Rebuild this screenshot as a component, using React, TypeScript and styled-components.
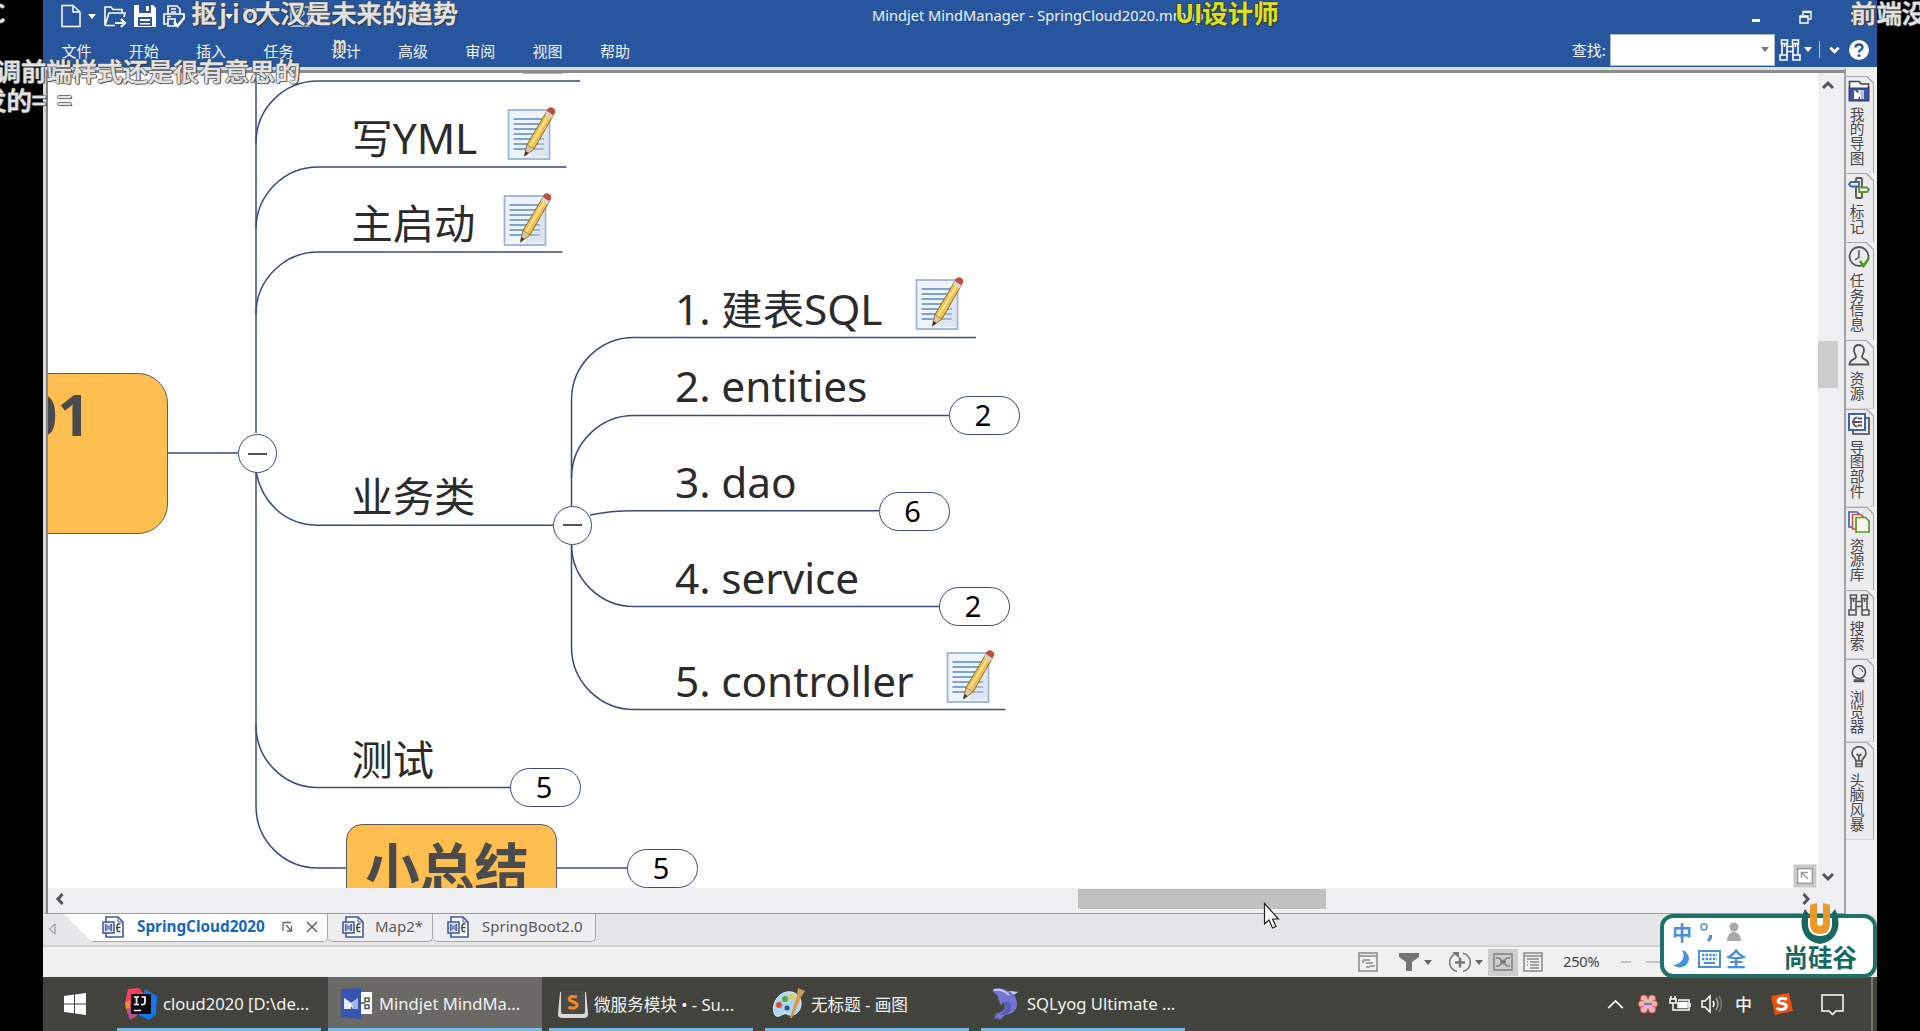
import React from "react";
import styled, { createGlobalStyle, css } from "styled-components";

const LATIN = `"Noto Sans", "Noto Sans CJK SC", sans-serif`;
const CJK = `"Noto Sans CJK SC", "Noto Sans", sans-serif`;
const INK = "#3a4a7c";

const GlobalStyle = createGlobalStyle`
  * { box-sizing: border-box; }
  body { margin: 0; background: #000; font-family: ${LATIN}; overflow: hidden; }
  svg { display: block; flex: none; }
`;

/* ---------- shell ---------- */
const Screen = styled.div`
  position: relative;
  width: 1920px;
  height: 1031px;
  padding: 0 43px;
  background: #000;
  overflow: hidden;
`;
const AppWindow = styled.div`
  width: 1834px;
  height: 1031px;
  display: flex;
  flex-direction: column;
  background: #efeef0;
`;
const Header = styled.header`
  height: 67px;
  flex: none;
  background: #27569e;
  color: #eef3fb;
`;
const TitleRow = styled.div`
  height: 32px;
  display: flex;
  align-items: center;
  padding: 0 15px 0 18px;
`;
const QuickTools = styled.div`
  display: flex;
  align-items: center;
  gap: 7px;
  width: 811px;
`;
const WindowTitle = styled.div`
  font-size: 14.6px;
  line-height: 30px;
  padding-bottom: 2px;
  white-space: nowrap;
  flex: 1;
`;
const WindowButtons = styled.div`
  display: flex;
  align-items: center;
  gap: 38px;
  padding-top: 2px;
`;
const MenuRow = styled.div`
  height: 35px;
  display: flex;
  align-items: center;
  padding: 0 8px 0 18.500px;
`;
const Menus = styled.nav`
  display: flex;
  flex: 1;
`;
const MenuItem = styled.span`
  width: 67.3px;
  font: 15px/35px ${CJK};
  padding-top: 1px;
`;
const FindLabel = styled.span`
  font: 15px/35px ${CJK};
  margin-right: 4px;
`;
const FindBox = styled.div`
  width: 165px;
  height: 32px;
  background: #fff;
  border: 1px solid #a9b6d0;
  display: flex;
  align-items: center;
  justify-content: flex-end;
  padding-right: 5px;
  margin-right: 4px;
`;
const Divider = styled.i`
  width: 1px;
  height: 17px;
  background: #b5c4e0;
  margin: 0 8px 0 7px;
`;
const Help = styled.svg`
  margin-left: 8px;
`;
const Caret = styled.i<{ $c?: string; $ml?: number }>`
  width: 0;
  height: 0;
  flex: none;
  border: 4px solid transparent;
  border-top: 5px solid ${(p) => p.$c || "#fff"};
  border-bottom: 0;
  margin-left: ${(p) => p.$ml || 0}px;
`;

/* ---------- work area ---------- */
const Body = styled.div`
  display: flex;
  height: 847px;
  flex: none;
`;
const DocPane = styled.div`
  width: 1803px;
  height: 847px;
  border-top: 3px solid #dedee2;
  border-left: 3px solid #d8d8d8;
  border-right: 2px solid #a2a2a6;
  border-bottom: 1px solid #9c9c9e;
`;
const DocInner = styled.div`
  height: 843px;
  width: 1798px;
  border-top: 3px solid #8c8c8c;
  border-left: 2px solid #858585;
  background: #efeef0;
  display: grid;
  grid-template-columns: 1770px 20px;
  grid-template-rows: 815px 24px;
`;
const Canvas = styled.main`
  position: relative;
  overflow: hidden;
  background: #fff;
`;
const Plane = styled.div`
  position: absolute;
  left: -48px;
  top: -73px;
  width: 1818px;
  height: 888px;
`;
const VScroll = styled.div`
  display: flex;
  flex-direction: column;
  align-items: center;
  padding: 5px 0 4px;
  & > svg:last-child { margin-top: auto; }
`;
const VThumb = styled.div`
  width: 20px;
  height: 47px;
  background: #cdcdcd;
  margin-top: 249px;
`;
const HScroll = styled.div`
  display: flex;
  align-items: flex-start;
  justify-content: space-between;
  padding: 1px 5px 0 5px;
  & > svg { margin-top: 3px; }
`;
const HThumb = styled.div`
  width: 248px;
  height: 20px;
  background: #c0c0c0;
  margin-left: 538px;
`;

/* ---------- map nodes (free canvas) ---------- */
const Topic = styled.div<{ $x: number; $base: number }>`
  position: absolute;
  left: ${(p) => p.$x}px;
  top: ${(p) => p.$base - 41}px;
  font-size: 42.4px;
  line-height: 50px;
  letter-spacing: -0.1px;
  color: #2b2b2b;
  white-space: pre;
`;
const Hanzi = styled.span`
  font-size: 41.3px;
  letter-spacing: 0;
`;
const Box = styled.div<{ $x: number; $y: number; $w: number; $h: number; $r: number }>`
  position: absolute;
  left: ${(p) => p.$x}px;
  top: ${(p) => p.$y}px;
  width: ${(p) => p.$w}px;
  height: ${(p) => p.$h}px;
  border-radius: ${(p) => p.$r}px;
  border: 1.5px solid #5c5a62;
  background: #ffbf50;
  color: #4b4a4c;
  font-weight: 700;
  text-align: right;
`;
const BigNumber = styled.div`
  font-size: 57px;
  line-height: 80px;
  padding-right: 77px;
`;
const BigLabel = styled.div`
  font: 700 54.5px/80px ${CJK};
  text-align: center;
  padding: 1px 8px 0 0;
  white-space: nowrap;
`;
const Pill = styled.div<{ $x: number; $y: number }>`
  position: absolute;
  left: ${(p) => p.$x}px;
  top: ${(p) => p.$y}px;
  width: 71px;
  height: 39px;
  border: 1.5px solid ${INK};
  border-radius: 20px;
  background: #fff;
  color: #000;
  font-size: 29px;
  line-height: 36px;
  text-align: center;
  padding-right: 3px;
`;
const Toggle = styled.div<{ $x: number; $y: number }>`
  position: absolute;
  left: ${(p) => p.$x - 19.5}px;
  top: ${(p) => p.$y - 19.5}px;
  width: 39px;
  height: 39px;
  border: 1.5px solid ${INK};
  border-radius: 50%;
  background: #fff;
  display: flex;
  align-items: center;
  justify-content: center;
  &::after { content: ""; width: 19px; height: 2px; background: #555; }
`;
const Pinned = styled.div<{ $x: number; $y: number }>`
  position: absolute;
  left: ${(p) => p.$x}px;
  top: ${(p) => p.$y}px;
`;
const FitButton = styled.div`
  position: absolute;
  right: 2px;
  bottom: 1px;
  width: 22px;
  height: 22px;
  background: #fff;
  border: 3px solid #c9c9c9;
  outline: 1px solid #e2e2e2;
`;

/* ---------- side tabs ---------- */
const Side = styled.aside`
  width: 31px;
  padding-top: 8.5px;
  background: #f0eff2;
`;
const SideTab = styled.div<{ $h: number }>`
  position: relative;
  width: 28px;
  height: ${(p) => p.$h}px;
  background: #a9a9ab;
  clip-path: polygon(0 0, 21px 0, 28px 7px, 28px 100%, 0 100%);
  padding: 1px 1px 0 0;
`;
const SideFace = styled.div`
  width: 27px;
  height: 100%;
  background: #ececee;
  clip-path: polygon(0 0, 20px 0, 27px 7px, 27px 100%, 0 100%);
  display: flex;
  flex-direction: column;
  align-items: center;
  padding: 3px 1px 0 0;
`;
const SideText = styled.div`
  width: 16px;
  margin: 5px 4px 0 0;
  font: 14.7px/14.7px ${CJK};
  color: #484850;
  word-break: break-all;
  text-align: center;
  overflow-wrap: anywhere;
`;

/* ---------- document tabs and status ---------- */
const TabStrip = styled.div`
  height: 33px;
  flex: none;
  background: #e6e6e8;
  border-bottom: 2px solid #d2d2d4;
  display: flex;
  align-items: flex-start;
`;
const ScrollLeft = styled.div`
  width: 21px;
  height: 30px;
  display: flex;
  align-items: center;
  padding-left: 5px;
`;
const DocTab = styled.div<{ $w: number; $active?: boolean; $gap?: number }>`
  height: 28px;
  width: ${(p) => p.$w}px;
  display: flex;
  align-items: center;
  padding: 0 0 2px 14px;
  font-size: 15px;
  color: #5a5a5c;
  background: #eeeef0;
  border: solid #a8a8aa;
  border-width: 0 1px 1px 0;
  border-radius: 0 0 5px 5px;
  white-space: nowrap;
  & > span { margin-left: ${(p) => p.$gap ?? 12}px; line-height: 24px; padding-bottom: 2px; }
  ${(p) =>
    p.$active &&
    css`
      background: #fff;
      color: #1466c4;
      font-weight: 700;
      font-size: 15.3px;
      padding-left: 38px;
      clip-path: polygon(0 0, 100% 0, 100% 100%, 28px 100%);
    `}
`;
const TabTools = styled.svg`
  margin-left: 17px;
`;
const StatusBar = styled.div`
  height: 30px;
  flex: none;
  background: #f0f0f0;
  display: flex;
  align-items: center;
  padding-left: 1315px;
  color: #444;
`;
const StatusButton = styled.div<{ $on?: boolean; $ml?: number }>`
  display: flex;
  align-items: center;
  justify-content: center;
  height: 27px;
  padding: 0 5px;
  margin-left: ${(p) => p.$ml || 0}px;
  background: ${(p) => (p.$on ? "#cdcdcd" : "transparent")};
`;
const Zoom = styled.span`
  font-size: 14.6px;
  line-height: 20px;
  padding-bottom: 2px;
  margin-left: 15px;
  width: 58px;
  letter-spacing: -0.2px;
`;
const Dash = styled.i<{ $w: number }>`
  width: ${(p) => p.$w}px;
  height: 2px;
  background: #c4c4c4;
  margin-right: 15px;
`;

/* ---------- taskbar ---------- */
const Taskbar = styled.footer`
  height: 54px;
  flex: none;
  background: #43433d;
  display: flex;
  color: #f2f2f0;
`;
const StartButton = styled.div`
  width: 74px;
  padding: 16px 0 0 21px;
`;
const Task = styled.div<{ $w: number; $mr: number; $on?: boolean; $gap?: number; $pl?: number }>`
  width: ${(p) => p.$w}px;
  margin-right: ${(p) => p.$mr}px;
  height: 54px;
  display: flex;
  align-items: center;
  gap: ${(p) => p.$gap ?? 6}px;
  padding-left: ${(p) => p.$pl ?? 8}px;
  background: ${(p) => (p.$on ? "#6a6965" : "transparent")};
  border-bottom: 3px solid #76b9ed;
  padding-top: 2px;
  font-size: 16.6px;
  white-space: nowrap;
`;
const Tray = styled.div`
  margin-left: auto;
  display: flex;
  align-items: center;
  padding-right: 4px;
`;
const TrayItem = styled.div<{ $w: number }>`
  width: ${(p) => p.$w}px;
  font: 500 17px/20px ${CJK};
`;
const ShowDesktop = styled.i`
  width: 2px;
  height: 54px;
  background: #77776f;
`;

/* ---------- overlays ---------- */
const Comment = styled.div<{ $x: number; $y: number; $c?: string; $bold?: boolean }>`
  position: absolute;
  left: ${(p) => p.$x}px;
  top: ${(p) => p.$y}px;
  font: ${(p) => (p.$bold ? 700 : 500)} 25.4px/30px ${CJK};
  color: ${(p) => p.$c || "#e2e3e5"};
  -webkit-text-stroke: ${(p) => (p.$bold ? 0 : 0.5)}px ${(p) => p.$c || "#e2e3e5"};
  white-space: pre;
  text-shadow: 1px 0 #444, -1px 0 #444, 0 1px #444, 0 -1px #444, 1px 1px 1px #222;
`;
const Half = styled.span<{ $s?: number }>`
  display: inline-block;
  width: 12.7px;
  text-align: center;
  font-size: ${(p) => p.$s || 25.4}px;
`;
const Narrow = styled.span`
  display: inline-block;
  font-size: 24px;
  transform: scaleX(0.6);
  transform-origin: 0 50%;
`;
const ImeBar = styled.div`
  position: absolute;
  left: 1660px;
  top: 914px;
  width: 217px;
  height: 64px;
  border: 4px solid #1e7068;
  border-radius: 13px;
  background: #fff;
  display: flex;
  justify-content: space-between;
  padding: 2px 16px 0 8px;
`;
const ImeKeys = styled.div`
  display: grid;
  grid-template-columns: 26px 28px 24px;
  grid-template-rows: 25px 27px;
  align-items: center;
  font: 700 20px/24px ${CJK};
  color: #4a8fdc;
`;
const Brand = styled.div`
  display: flex;
  flex-direction: column;
  align-items: center;
  margin-top: -17px;
  font: 700 24.5px/24px ${CJK};
  color: #17695f;
  & > span { margin-top: 1px; }
`;
const Cursor = styled.div`
  position: absolute;
  left: 1262.5px;
  top: 902px;
`;

/* ---------- icons ---------- */
const NoteIcon = () => (
  <svg width="50" height="56" viewBox="0 0 50 56">
    <rect x="1.500" y="4" width="41" height="49" fill="#eef4fc" stroke="#9cb4d8" strokeWidth="1.8" />
    <path d="M6.500 13H36M6.500 18H35M6.500 23H34M6.500 28H36M6.500 33H37M6.500 38H37M6.500 43H37" stroke="#7fa3d2" strokeWidth="1.8" />
    <path d="M22 51L42 50V20Z" fill="#c8d2e2" opacity=".45" />
    <path d="M17.500 50L20 38.500L40 5L46.500 9L27 43Z" fill="#f0c04c" stroke="#8a6a2c" strokeWidth="1" />
    <path d="M23 40.500L42.500 8" stroke="#fbe7a0" strokeWidth="2" />
    <path d="M17.500 50L20 38.500L27 43Z" fill="#e2c69a" stroke="#8a7450" strokeWidth=".7" />
    <path d="M17.500 50L18.500 45L21.500 47Z" fill="#333" />
    <path d="M40 5L46.500 9L44.500 12.500L38 8.500Z" fill="#d9d4c4" />
    <path d="M40.500 4.500C41 1 46 1 47.500 4C48 6.500 47 8 46 8.500Z" fill="#c94b40" stroke="#b5443a" />
  </svg>
);
const Chevron = ({ d, c = "#555", s = 14, w = 3 }: { d: string; c?: string; s?: number; w?: number }) => (
  <svg width={s} height={s} viewBox="0 0 14 14">
    <path d={d} fill="none" stroke={c} strokeWidth={w} />
  </svg>
);
const UP = "M2 10L7 5L12 10";
const DOWN = "M2 4L7 9L12 4";
const LEFT = "M9.500 2L5 7L9.500 12";
const RIGHT = "M4.500 2L9 7L4.500 12";

const Binoculars = ({ c = "#fff" }: { c?: string }) => (
  <svg width="22" height="22" viewBox="0 0 22 22" fill="none" stroke={c} strokeWidth="1.600">
    <path d="M2.500 1H8.500V4.500H2.500ZM13.500 1H19.500V4.500H13.500ZM3 4.500V16M19 4.500V16M8 4.500V16M14 4.500V16M5.500 4.500V8M16.500 4.500V8M8 7.500H14M8 12.500H14M1 16H8V21H1ZM14 16H21V21H14Z" />
  </svg>
);
const MapFileIcon = () => (
  <svg width="22" height="22" viewBox="0 0 22 22">
    <path d="M4 1H16L21 6V21H4Z" fill="#fff" stroke="#3c55a8" strokeWidth="1.600" />
    <path d="M16 1V6H21" fill="none" stroke="#3c55a8" />
    <rect x="1" y="6" width="11" height="11" fill="#dfe4f2" stroke="#3c55a8" strokeWidth="1.500" />
    <path d="M3.500 15V8L6.500 11L9.500 8V15L6.500 12Z" fill="#8d95b5" stroke="#53629c" />
    <path d="M14 11.500H18.500M18.500 8H16L15 9.500V14L16 15.500H18.500" fill="none" stroke="#444" strokeWidth="1.400" />
  </svg>
);

const sideIcons: Record<string, React.ReactNode> = {
  maps: (
    <>
      <path d="M1.500 8V1.500H11L13 4H20.500V8" fill="#fff" stroke="#444" strokeWidth="1.600" />
      <rect x="1" y="8" width="20" height="13" fill="#3b52a4" stroke="#333a5c" />
      <path d="M6 10L10.500 13.500V10H16V19H12V16L10.500 17.500V19H6Z" fill="#fff" />
      <path d="M12 10L16 10V19H13Z" fill="#b9bfd4" />
    </>
  ),
  marks: (
    <g fill="none" strokeWidth="1.800">
      <rect x="8" y="1" width="6" height="20" rx="1" stroke="#555" />
      <path d="M3 5H11V9.500H3L1 7.200Z" stroke="#3a63b4" fill="#eef" />
      <path d="M11 10.500H19L21 12.700L19 15H11Z" stroke="#5c962c" fill="#efe" />
    </g>
  ),
  task: (
    <g fill="none">
      <circle cx="11" cy="10.500" r="9.500" stroke="#555" strokeWidth="1.800" />
      <path d="M11 4V11L7 14" stroke="#555" strokeWidth="1.500" />
      <path d="M12 15L15.500 20L21 12" stroke="#4f9a1e" strokeWidth="2.600" />
    </g>
  ),
  person: (
    <path d="M11 1C7.500 1 6 3.500 6 6C6 9 8 10.500 8 13C8 15.500 1.500 15 1.500 20.500H20.500C20.500 15 14 15.500 14 13C14 10.500 16 9 16 6C16 3.500 14.500 1 11 1Z" fill="none" stroke="#555" strokeWidth="1.800" />
  ),
  parts: (
    <g fill="none">
      <path d="M18 5H21V21H5V18" stroke="#444" strokeWidth="1.600" />
      <rect x="1" y="1" width="16" height="16" fill="#fff" stroke="#3a63b4" strokeWidth="2" />
      <path d="M4 9H10M9.500 4.500C4 4.500 4 13.500 9.500 13.500M10 5.500H14M10 9H14M10 12.500H14" stroke="#555" strokeWidth="2" />
    </g>
  ),
  library: (
    <g strokeWidth="1.700">
      <path d="M1 1H9L12 4V16H1Z" fill="#fff" stroke="#3a63b4" />
      <path d="M4.500 3.500H13L16 7V18H4.500Z" fill="#fff" stroke="#d2502e" />
      <path d="M8 6.500H17.500L21 10V21H8Z" fill="#f4f8ec" stroke="#5c962c" />
    </g>
  ),
  globe: (
    <g fill="none" stroke="#555" strokeWidth="1.700">
      <circle cx="11" cy="9" r="6.500" />
      <path d="M11 5.500C13 5.500 14.500 7 14.500 9" strokeWidth="1" />
      <path d="M6.500 17H15.500V18.500H6.500Z" fill="#444" />
    </g>
  ),
  bulb: (
    <g fill="none" stroke="#555" strokeWidth="1.700">
      <path d="M8 15C8 12 4 11 4 7A7 6.300 0 0 1 18 7C18 11 14 12 14 15V20.500H8ZM8 15H14M8 18H14" />
      <path d="M8.500 8L11 10L13.500 8M11 10V15" />
    </g>
  ),
};

const sideTabs: [string, string, number][] = [
  ["maps", "我的导图", 97.5],
  ["marks", "标记", 69],
  ["task", "任务信息", 98],
  ["person", "资源", 68.5],
  ["parts", "导图部件", 98],
  ["library", "资源库", 83.5],
  ["find", "搜索", 68.5],
  ["globe", "浏览器", 83],
  ["bulb", "头脑风暴", 98],
];

const menus = ["文件", "开始", "插入", "任务", "设计", "高级", "审阅", "视图", "帮助"];

const branches = [
  "M167 453H238",
  "M256 73V433M256 473V806",
  "M256 143C256 108 284 81 318 81H580",
  "M256 229C256 195 284 167 318 167H566.500",
  "M256 314C256 280 284 252 318 252H562.500",
  "M256 472C262 502 284 525 318 525.300H553",
  "M256 725C256 760 284 787.500 318 787.500H510",
  "M256 806C256 841 284 868 318 868H346",
  "M556 868H628",
  "M571.500 506V400C571.500 365 600 337.500 634 337.500H976",
  "M571.500 478C571.500 443 600 415.500 634 415.500H949",
  "M590 515C604 512 618 510.700 634 510.700H879",
  "M571.500 544C571.500 579 600 606.500 634 606.500H939",
  "M571.500 544V647C571.500 682 600 709.500 634 709.500H1005.500",
];

export default function App() {
  return (
    <Screen>
      <GlobalStyle />
      <AppWindow>
        <Header>
          <TitleRow>
            <QuickTools>
              <svg width="20" height="24" viewBox="0 0 20 24" fill="none" stroke="#fff" strokeWidth="1.500">
                <path d="M1 1.500H12L19 8V22.500H1ZM12 1.500V8H19" />
              </svg>
              <Caret />
              <svg width="24" height="24" viewBox="0 0 24 24" fill="none" stroke="#fff" strokeWidth="1.600">
                <path d="M2 21.500V3H8L10 5.500H19V9M2 21.500L6 9H22L21 13M2 21.500H12" />
                <path d="M12 19H21M18 15L22 19L18 23" strokeWidth="2.200" />
              </svg>
              <svg width="22" height="22" viewBox="0 0 22 22">
                <path d="M0 0H19L22 3V22H0Z" fill="#fff" />
                <path d="M5 0H17V8H5ZM4 12H18V21H4Z" fill="#27569e" />
                <path d="M12 1H15V6H12ZM6 14H16V16H6ZM6 18H16V19.500H6Z" fill="#fff" />
              </svg>
              <svg width="22" height="24" viewBox="0 0 22 24" fill="none" stroke="#fff" strokeWidth="1.700">
                <path d="M5 10V2H14L17 5V10M8 5H13M8 8H13M4 20H1V10H21V15M5 15H12V22H5ZM4 12.500H8" />
                <path d="M11 18L14.500 22L21 14" strokeWidth="2.600" />
              </svg>
              <svg width="120" height="24" viewBox="0 0 120 24" fill="none" stroke="#c7d5ec" strokeWidth="2">
                <path d="M10 4L5 9L10 14M5 9H16C23 9 23 20 15 20" />
                <path d="M33 10H41L37 15Z" fill="#fff" stroke="none" />
                <path d="M51 4H65L58 14Z" fill="#6f8fc4" stroke="none" />
                <path d="M76 10H82L79 14Z" fill="#9db4da" stroke="none" />
                <path d="M99 22V3H117V22ZM104 9C104 5 112 5 112 9C112 12 108 11 108 15M108 17V19" strokeWidth="1.500" />
              </svg>
            </QuickTools>
            <WindowTitle>Mindjet MindManager - SpringCloud2020.mmap</WindowTitle>
            <WindowButtons>
              <svg width="10" height="12" viewBox="0 0 10 12"><path d="M1 9.500H9" stroke="#fff" strokeWidth="3" /></svg>
              <svg width="13" height="14" viewBox="0 0 13 14" fill="none" stroke="#fff" strokeWidth="1.400">
                <path d="M4 5V1.500H12V9H9M4 2.300H12" /><path d="M1 6H9V13H1ZM1 7H9" />
              </svg>
              <svg width="12" height="12" viewBox="0 0 12 12"><path d="M1.500 1.500L10.500 10.500M10.500 1.500L1.500 10.500" stroke="#fff" strokeWidth="2" /></svg>
            </WindowButtons>
          </TitleRow>
          <MenuRow>
            <Menus>{menus.map((m) => <MenuItem key={m}>{m}</MenuItem>)}</Menus>
            <FindLabel>查找:</FindLabel>
            <FindBox><Caret $c="#777" /></FindBox>
            <Binoculars />
            <Caret $ml={3} />
            <Divider />
            <Chevron d="M2.500 5L7 9.500L11.500 5" c="#fff" s={13} w={3} />
            <Help width="20" height="20" viewBox="0 0 20 20">
              <circle cx="10" cy="10" r="10" fill="#fff" />
              <path d="M6.500 7.500C6.500 3.500 13.500 3.500 13.500 7.500C13.500 10 10 9.500 10 12.500" fill="none" stroke="#27569e" strokeWidth="2.400" />
              <circle cx="10" cy="15.500" r="1.500" fill="#27569e" />
            </Help>
          </MenuRow>
        </Header>

        <Body>
          <DocPane>
            <DocInner>
              <Canvas>
                <Plane>
                  <svg width="1818" height="888" viewBox="0 0 1818 888" fill="none" stroke={INK} strokeWidth="1.500">
                    {branches.map((d) => <path key={d} d={d} />)}
                    <path d="M523 73H563" stroke="#a9b8cc" strokeWidth="2" />
                  </svg>
                  <Box $x={-60} $y={373} $w={228} $h={161} $r={30}><BigNumber>01</BigNumber></Box>
                  <Toggle $x={257} $y={453.5} />
                  <Toggle $x={572.5} $y={525} />
                  <Topic $x={351.5} $base={153.5}><Hanzi>写</Hanzi>YML</Topic>
                  <Topic $x={351.5} $base={238.500}><Hanzi>主启动</Hanzi></Topic>
                  <Topic $x={351.5} $base={512}><Hanzi>业务类</Hanzi></Topic>
                  <Topic $x={351.5} $base={775}><Hanzi>测试</Hanzi></Topic>
                  <Topic $x={675} $base={324.5}>1. <Hanzi>建表</Hanzi>SQL</Topic>
                  <Topic $x={675} $base={402}>2. entities</Topic>
                  <Topic $x={675} $base={498}>3. dao</Topic>
                  <Topic $x={675} $base={593.5}>4. service</Topic>
                  <Topic $x={675} $base={696.5}>5. controller</Topic>
                  <Pinned $x={507} $y={105.5}><NoteIcon /></Pinned>
                  <Pinned $x={503} $y={191.5}><NoteIcon /></Pinned>
                  <Pinned $x={915} $y={275.5}><NoteIcon /></Pinned>
                  <Pinned $x={946} $y={649}><NoteIcon /></Pinned>
                  <Pill $x={949} $y={396}>2</Pill>
                  <Pill $x={878.5} $y={491.5}>6</Pill>
                  <Pill $x={939} $y={587}>2</Pill>
                  <Pill $x={510} $y={768}>5</Pill>
                  <Box $x={345.5} $y={824} $w={211} $h={100} $r={16}><BigLabel>小总结</BigLabel></Box>
                  <Pill $x={627} $y={848.5}>5</Pill>
                </Plane>
                <FitButton>
                  <svg width="16" height="16" viewBox="0 0 16 16" fill="none" stroke="#9a9a9a" strokeWidth="1.400">
                    <rect x=".7" y=".7" width="14.600" height="14.600" />
                    <path d="M4.500 10V4.500H11M5 5L11 11" />
                  </svg>
                </FitButton>
              </Canvas>
              <VScroll>
                <Chevron d={UP} />
                <VThumb />
                <Chevron d={DOWN} />
              </VScroll>
              <HScroll>
                <Chevron d={LEFT} />
                <HThumb />
                <Chevron d={RIGHT} />
              </HScroll>
            </DocInner>
          </DocPane>
          <Side>
            {sideTabs.map(([icon, label, h]) => (
              <SideTab key={label} $h={h}>
                <SideFace>
                  {icon === "find" ? <Binoculars c="#555" /> : <svg width="22" height="22" viewBox="0 0 22 22">{sideIcons[icon]}</svg>}
                  <SideText>{label}</SideText>
                </SideFace>
              </SideTab>
            ))}
          </Side>
        </Body>

        <TabStrip>
          <ScrollLeft>
            <svg width="8" height="12" viewBox="0 0 8 12"><path d="M7 1V11L1.500 6Z" fill="none" stroke="#888" /></svg>
          </ScrollLeft>
          <DocTab $w={264} $active $gap={13}>
            <MapFileIcon />
            <span>SpringCloud2020</span>
            <TabTools width="36" height="12" viewBox="0 0 36 12" fill="none" stroke="#666" strokeWidth="1.300">
              <path d="M1 10V1.500H9M4 4L9 9.500M9.500 5V10H5" />
              <path d="M25 1L35 11M35 1L25 11" strokeWidth="1.600" />
            </TabTools>
          </DocTab>
          <DocTab $w={105} $gap={11}><MapFileIcon /><span>Map2*</span></DocTab>
          <DocTab $w={163} $gap={13}><MapFileIcon /><span>SpringBoot2.0</span></DocTab>
        </TabStrip>

        <StatusBar>
          <svg width="20" height="20" viewBox="0 0 20 20" fill="none" stroke="#888" strokeWidth="1.500">
            <path d="M1 1H19V19H1ZM1 4H19M5 8H12M8 11H15V11M5 8V11M12 14H17M8 15H12" />
          </svg>
          <StatusButton $ml={16}>
            <svg width="20" height="20" viewBox="0 0 20 20"><path d="M0 1H20V5L13 10V19H7V10L0 5Z" fill="#757575" /></svg>
            <Caret $c="#666" $ml={5} />
          </StatusButton>
          <StatusButton $ml={7}>
            <svg width="22" height="22" viewBox="0 0 22 22" fill="none" stroke="#777">
              <path d="M8 2.300A9.300 9.300 0 0 0 8 20.500M14 2.300A9.300 9.300 0 0 1 14 20.500" strokeWidth="1.500" />
              <path d="M11 6.500V16.500M6 11.500H16" strokeWidth="2.400" />
              <path d="M3 1H10V7Z" fill="#777" stroke="none" />
            </svg>
            <Caret $c="#666" $ml={4} />
          </StatusButton>
          <StatusButton $on>
            <svg width="20" height="20" viewBox="0 0 20 20" fill="none" stroke="#808080" strokeWidth="1.500">
              <path d="M1 2H19V18H1ZM3 6H6L9 9M3 14H6L9 11M17 6H14L11 9M17 14H14L11 11" />
              <path d="M8 8.500H12V11.500H8Z" fill="#777" />
            </svg>
          </StatusButton>
          <StatusButton>
            <svg width="20" height="20" viewBox="0 0 20 20" fill="none" stroke="#888" strokeWidth="1.500">
              <path d="M1 1H19V19H1ZM1 4H19M4 7H16M7 10H16M7 13H16M7 16H16M4 10H5M4 13H5" />
            </svg>
          </StatusButton>
          <Zoom>250%</Zoom>
          <Dash $w={10} />
          <Dash $w={16} />
        </StatusBar>

        <Taskbar>
          <StartButton>
            <svg width="22" height="22" viewBox="0 0 22 22" fill="#fff">
              <path d="M0 3L10 1.600V10.400H0ZM11 1.400L22 0V10.400H11ZM0 11.400H10V20.300L0 19ZM11 11.400H22V22L11 20.500Z" />
            </svg>
          </StartButton>
          <Task $w={204} $mr={7}>
            <svg width="32" height="32" viewBox="0 0 32 32">
              <path d="M3 1L14 0L20 8L6 22L0 15Z" fill="#fb3c63" />
              <path d="M20 1L32 8L31 26L24 32L12 26Z" fill="#1479f0" />
              <path d="M1 17L8 15L12 28L5 32L2 24Z" fill="#b84d94" />
              <path d="M0 15L5 12V20L1 21Z" fill="#f98a2c" />
              <rect x="6" y="6" width="20" height="20" fill="#0a0a0a" />
              <path d="M9 9H14M11.500 9V16.500M9 16.500H14M16.500 9H20V14.500Q20 17 16 16.500M9 22.500H16" fill="none" stroke="#fff" strokeWidth="1.700" />
            </svg>
            <span>cloud2020 [D:\de...</span>
          </Task>
          <Task $w={214} $mr={7} $on $pl={13} $gap={7}>
            <svg width="31" height="31" viewBox="0 0 31 31">
              <path d="M0 1L20 0V31L0 29Z" fill="#3653b4" />
              <path d="M20 4H31V26H20Z" fill="#fff" />
              <path d="M3 10L10 15V21H3Z" fill="#fff" />
              <path d="M3 10L10 15L17 10V21H12L10 18V21H3Z" fill="#e8ecfa" />
              <path d="M11 15L17 10V21H12Z" fill="#a9b4dc" />
              <path d="M20 15H24M24 10H28V13.500H24ZM24 17H28V20.500H24Z" fill="none" stroke="#555" strokeWidth="1.500" />
            </svg>
            <span>Mindjet MindMa...</span>
          </Task>
          <Task $w={204} $mr={12} $pl={9}>
            <svg width="30" height="28" viewBox="0 0 30 28">
              <path d="M2 2H28L30 24Q30 28 26 28H4Q0 28 0 24Z" fill="#d9d9d9" />
              <path d="M3 1H27V22Q27 24 25 24H5Q3 24 3 22Z" fill="#4c4a48" />
              <path d="M19 7C12 5 9 9 13 11C18 13 21 14 18 17C16 19 12 18 10.500 17" fill="none" stroke="#f58a1f" strokeWidth="3" />
            </svg>
            <span>微服务模块 • - Su...</span>
          </Task>
          <Task $w={204} $mr={12}>
            <svg width="32" height="32" viewBox="0 0 32 32">
              <path d="M14 4C2 6-2 20 2 27C6 31 10 24 14 26C20 30 29 24 28 14C27 7 21 3 14 4Z" fill="#a9d7ee" stroke="#e5f4fb" />
              <circle cx="6" cy="17" r="3" fill="#d8503a" /><circle cx="12" cy="11" r="3" fill="#58a84c" />
              <circle cx="19" cy="9" r="3" fill="#f0c83c" /><circle cx="14" cy="20" r="2.500" fill="#2d4f7c" />
              <path d="M17 30L24 8L28 9L19 30Z" fill="#e8923a" /><path d="M24 8L25 0L32 3L28 9Z" fill="#c99a64" />
            </svg>
            <span>无标题 - 画图</span>
          </Task>
          <Task $w={204} $mr={0} $pl={10}>
            <svg width="30" height="32" viewBox="0 0 30 32">
              <path d="M1 2C6-1 13 0 17 3L27 4L23 7C29 16 26 26 14 27L9 32L6 30L3 31L5 26C13 24 16 20 12 14L10 18L7 10C7 6 3 6 1 2Z" fill="#7474d2" />
              <path d="M12 14C17 18 16 23 9 26L14 27C20 25 22 20 18 14Z" fill="#5a5ab8" />
              <path d="M3 2C9 1 14 3 18 7" stroke="#c9cbf8" strokeWidth="2.200" fill="none" />
              <path d="M18 3L27 4L23 6.500Z" fill="#cfd0f6" />
            </svg>
            <span>SQLyog Ultimate ...</span>
          </Task>
          <Tray>
            <TrayItem $w={31}><Chevron d="M1 10L7 4L13 10" c="#fff" s={17} w={1.300} /></TrayItem>
            <TrayItem $w={31}>
              <svg width="20" height="20" viewBox="0 0 20 20" fill="#f3b4b4" stroke="#d95c5c">
                <circle cx="6" cy="4.500" r="3.500" /><circle cx="14" cy="4.500" r="3.500" /><circle cx="4" cy="10" r="3.500" /><circle cx="16" cy="10" r="3.500" />
                <circle cx="6" cy="15.500" r="3.500" /><circle cx="14" cy="15.500" r="3.500" />
                <circle cx="10" cy="10" r="5" stroke="none" /><path d="M6 10H14" stroke="#6d83c4" strokeWidth="2.500" />
              </svg>
            </TrayItem>
            <TrayItem $w={32}>
              <svg width="22" height="18" viewBox="0 0 22 18" fill="none" stroke="#fff" strokeWidth="1.500">
                <path d="M2 1V4M6 1V4M1 4H7V8H1ZM4 8V15H7M9 5H20V15H7M21 8V12" /><path d="M9 7.500H18V12.500H9Z" fill="#fff" />
              </svg>
            </TrayItem>
            <TrayItem $w={34}>
              <svg width="22" height="20" viewBox="0 0 22 20" fill="none" stroke="#fff" strokeWidth="1.500">
                <path d="M1 7H4L9 2V18L4 13H1Z" /><path d="M12 7Q14 10 12 13" /><path d="M15 4Q19 10 15 16" stroke="#aaa" /><path d="M18 2Q23 10 18 18" stroke="#777" />
              </svg>
            </TrayItem>
            <TrayItem $w={36}>中</TrayItem>
            <TrayItem $w={50}>
              <svg width="22" height="22" viewBox="0 0 22 22">
                <path d="M0 3L18 0L22 18L4 22Z" fill="#ee5014" />
                <path d="M16 6.500C10 3.500 5 7 8 9.500C11 11 16 10 15 14C14 17 8 17 6 15" fill="none" stroke="#fff" strokeWidth="3" />
              </svg>
            </TrayItem>
            <TrayItem $w={50}>
              <svg width="23" height="23" viewBox="0 0 23 23"><path d="M1 2H22V18H15L11.500 21.500L8 18H1Z" fill="none" stroke="#fff" strokeWidth="1.500" /></svg>
            </TrayItem>
            <ShowDesktop />
          </Tray>
        </Taskbar>
      </AppWindow>

      <ImeBar>
        <ImeKeys>
          <span>中</span>
          <svg width="16" height="22" viewBox="0 0 16 22" fill="none" stroke="#4a8fdc">
            <circle cx="6" cy="5" r="3" strokeWidth="1.400" /><path d="M12.500 13V16L10 19" strokeWidth="3" />
          </svg>
          <svg width="16" height="22" viewBox="0 0 16 22" fill="#a9a9a9"><circle cx="8" cy="5" r="4.500" /><path d="M1 19C1 7 15 7 15 19Z" /></svg>
          <svg width="18" height="20" viewBox="0 0 18 20"><path d="M10 1C14 8 10 15 1 16C7 21 16 18 17 10C17 6 14 2 10 1Z" fill="#4a8fdc" /></svg>
          <svg width="23" height="18" viewBox="0 0 23 18" fill="none" stroke="#4a8fdc">
            <rect x="1" y="1" width="21" height="16" strokeWidth="2" />
            <path d="M4 5H19M4 9H19" strokeWidth="2.400" strokeDasharray="2.400 1.200" /><path d="M6 13H17" strokeWidth="2" />
          </svg>
          <span>全</span>
        </ImeKeys>
        <Brand>
          <svg width="40" height="41" viewBox="0 0 40 41">
            <path d="M5 6C-3 22 3 39 20 41C37 39 43 22 35 6L32 10V22Q31 33 20 33Q9 33 8 22V10Z" fill="#17695f" />
            <path d="M10 2L17 0V21Q20 25 23 21V0L30 2V20Q30 31 20 31Q10 31 10 20Z" fill="#ea9a2a" />
          </svg>
          <span>尚硅谷</span>
        </Brand>
      </ImeBar>

      <Cursor>
        <svg width="17" height="28" viewBox="0 0 17 28">
          <path d="M1.500 1.500V22L6 18L9.500 26L13 24.500L9.500 17H15.500Z" fill="#fff" stroke="#222" strokeWidth="1.200" />
        </svg>
      </Cursor>

      <Comment $x={-11} $y={-3}><Half>C</Half></Comment>
      <Comment $x={191.5} $y={-3.5}>抠<Half>j</Half><Half>i</Half><Half>o</Half>大汉是未来的趋势</Comment>
      <Comment $x={332.5} $y={27}><Narrow>m</Narrow></Comment>
      <Comment $x={-4.5} $y={54.5}>调前端样式还是很有意思的</Comment>
      <Comment $x={-19} $y={84}>发的<Half>=</Half><Half> </Half><Half>=</Half></Comment>
      <Comment $x={1175} $y={-3.5} $c="#dbe21c" $bold>UI设计师</Comment>
      <Comment $x={1851} $y={-3.5}>前端没</Comment>
    </Screen>
  );
}
